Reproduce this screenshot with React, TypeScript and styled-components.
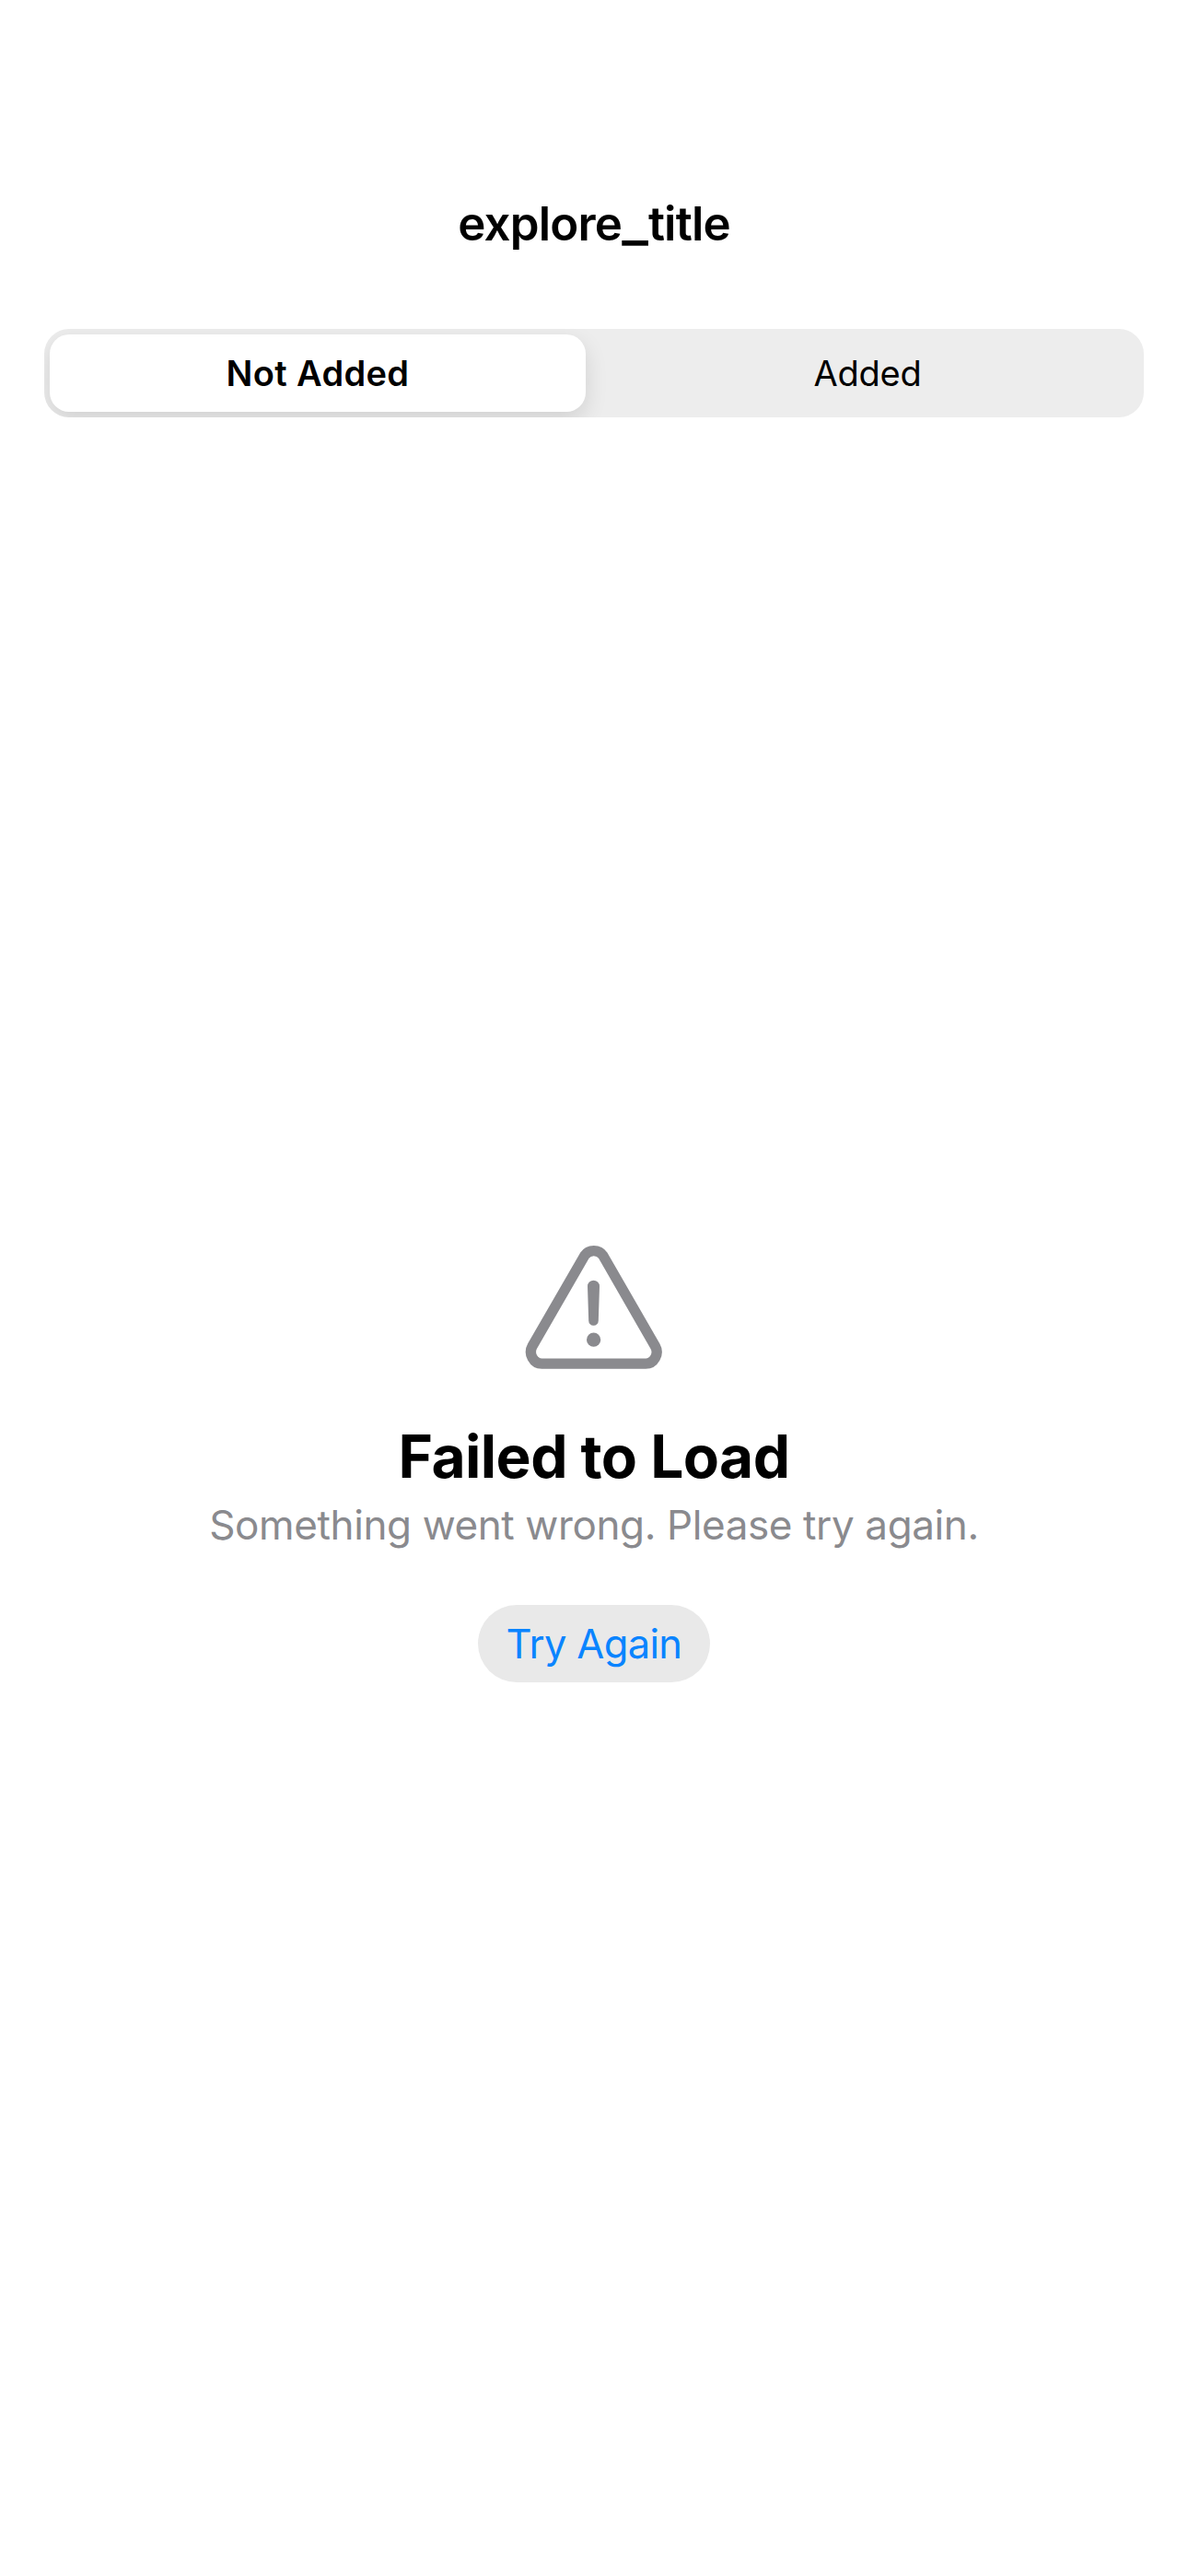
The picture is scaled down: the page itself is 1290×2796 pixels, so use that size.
import React from 'react';
import styled, { createGlobalStyle } from 'styled-components';

const Global = createGlobalStyle`
  *{box-sizing:border-box}
  body{margin:0;background:#fff;font-family:Inter,"Liberation Sans",sans-serif;color:#000}
`;
const Screen = styled.main`
  display:flex;flex-direction:column;width:1290px;height:2796px;padding:177px 48px 0;background:#fff;
`;
const Header = styled.header`display:flex;align-items:center;justify-content:center;height:132px;`;
const Title = styled.h1`margin:0;font-size:51px;line-height:60px;font-weight:600;letter-spacing:-0.8px;`;
const Underscore = styled.span`font-size:62px;line-height:0;font-weight:500;letter-spacing:0;`;
const Segments = styled.div`
  display:grid;grid-template-columns:582px 588px;gap:12px;height:96px;margin-top:48px;padding:6px;
  border-radius:27px;background:#ededed;overflow:hidden;
`;
const Segment = styled.button<{ $active?: boolean }>`
  border:0;padding:0;font:inherit;font-size:38px;line-height:48px;
  font-weight:${p => (p.$active ? 570 : 400)};
  letter-spacing:${p => (p.$active ? '0.35px' : '-0.25px')};
  background:${p => (p.$active ? '#fff' : 'transparent')};
  border-radius:21px;color:#000;
  box-shadow:${p => (p.$active ? '0 9px 24px rgba(0,0,0,.12)' : 'none')};
`;
const ErrorState = styled.section`display:flex;flex-direction:column;align-items:center;margin-top:897px;`;
const Warning = styled.svg`display:block;width:150px;height:138px;`;
const Heading = styled.h2`margin:53px 0 0;font-size:64px;line-height:80px;font-weight:700;letter-spacing:-0.55px;`;
const Message = styled.p`margin:4px 0 0;font-size:44px;line-height:60px;letter-spacing:-0.38px;color:#8a8a8e;`;
const Retry = styled.button`
  margin-top:57px;width:252px;height:84px;border:0;border-radius:42px;padding:0;background:#e9e9e9;
  color:#0a84ff;font:inherit;font-size:43.5px;letter-spacing:-0.65px;
`;

export default function App() {
  return (
    <>
      <Global />
      <Screen>
        <Header><Title>explore<Underscore>_</Underscore>title</Title></Header>
        <Segments>
          <Segment $active>Not Added</Segment>
          <Segment>Added</Segment>
        </Segments>
        <ErrorState>
          <Warning viewBox="0 0 150 138" fill="none">
            <path
              d="M64.8 12.8C69.2 5.8 80.4 5.8 84.8 12.8L141.4 111.1C146.2 119.5 140.2 130.2 131.1 130.2H18.4C9.4 130.2 3.4 119.5 8.1 111.1Z"
              stroke="#8a8a8e"
              strokeWidth="11.3"
            />
            <path
              d="M68 46.2a6.5 6.5 0 0 1 13 0L79.8 83.5a5.3 5.3 0 0 1-10.6 0Z"
              fill="#8a8a8e"
            />
            <circle cx="74.6" cy="104.2" r="7.6" fill="#8a8a8e" />
          </Warning>
          <Heading>Failed to Load</Heading>
          <Message>Something went wrong. Please try again.</Message>
          <Retry>Try Again</Retry>
        </ErrorState>
      </Screen>
    </>
  );
}
